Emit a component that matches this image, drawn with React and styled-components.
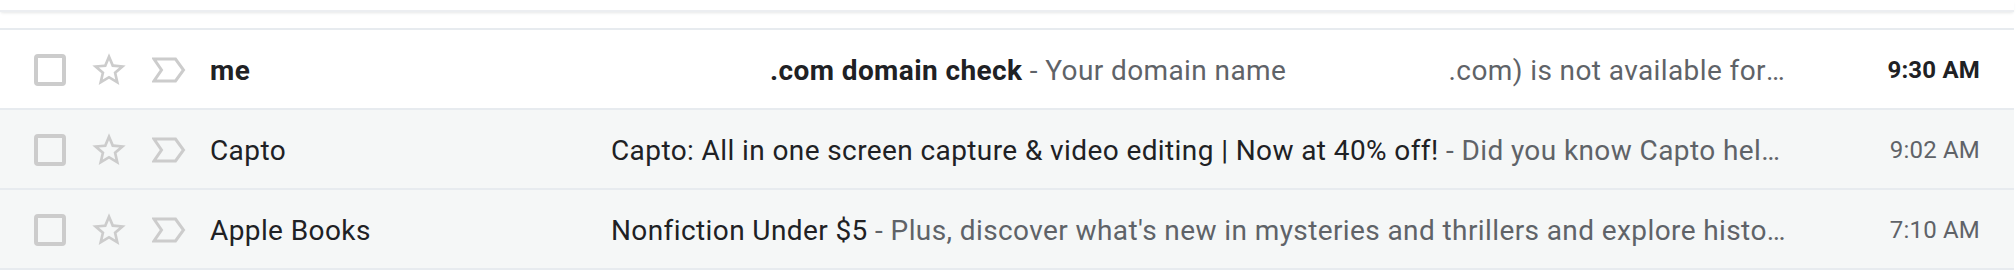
import React from 'react';
import styled, { createGlobalStyle } from 'styled-components';

const GlobalStyle = createGlobalStyle`
  html, body {
    margin: 0;
    padding: 0;
    background: #ffffff;
    font-family: Roboto, "Liberation Sans", Arial, sans-serif;
    -webkit-font-smoothing: antialiased;
  }
`;

const messages = [
  {
    id: 1,
    unread: true,
    sender: 'me',
    subject: [{ hide: 159 }, { text: '.com domain check' }],
    snippet: [
      { text: 'Your domain name ' },
      { hide: 155 },
      { text: '.com) is not available for registration. Please choose another name' },
    ],
    time: '9:30 AM',
  },
  {
    id: 2,
    unread: false,
    sender: 'Capto',
    subject: [{ text: 'Capto: All in one screen capture & video editing | Now at 40% off!' }],
    snippet: [{ text: 'Did you know Capto helps you record your screen, edit videos and more' }],
    time: '9:02 AM',
  },
  {
    id: 3,
    unread: false,
    sender: 'Apple Books',
    subject: [{ text: 'Nonfiction Under $5' }],
    snippet: [
      { text: "Plus, discover what's new in mysteries and thrillers and explore history and biographies" },
    ],
    time: '7:10 AM',
  },
];

const Page = styled.div`
  width: 2014px;
`;

const Toolbar = styled.div`
  height: 10px;
  background: #ffffff;
  border-bottom: 2px solid #eceef1;
  box-shadow: 0 2px 3px -1px rgba(60, 64, 67, 0.12);
`;

const List = styled.div`
  margin-top: 16px;
`;

const Row = styled.div`
  box-sizing: border-box;
  display: flex;
  align-items: center;
  height: 80px;
  padding: 2px 34px 0 34px;
  border-top: 2px solid #e7ebef;
  background: ${(p) => (p.$unread ? '#ffffff' : 'rgba(242, 245, 245, 0.8)')};
  color: #202124;
  letter-spacing: 0.4px;

  &:last-child {
    border-bottom: 2px solid #e7ebef;
    height: 82px;
  }
`;

const Checkbox = styled.span`
  flex: 0 0 auto;
  box-sizing: border-box;
  width: 32px;
  height: 32px;
  border: 4px solid #cccccc;
  border-radius: 4px;
`;

const IconSlot = styled.span`
  flex: 0 0 auto;
  display: flex;
  align-items: center;
  justify-content: center;
  width: ${(p) => p.$w}px;
  margin-left: ${(p) => p.$ml}px;
  color: #cccccc;
`;

const Sender = styled.div`
  flex: 0 0 401px;
  margin-left: 24px;
  font-size: 28px;
  font-weight: ${(p) => (p.$unread ? 700 : 400)};
  white-space: nowrap;
  overflow: hidden;
`;

const Line = styled.div`
  flex: 1 1 auto;
  min-width: 0;
  font-size: 28px;
  color: #5f6368;
  white-space: nowrap;
  overflow: hidden;
  text-overflow: ellipsis;
`;

const Subject = styled.span`
  color: #202124;
  font-weight: ${(p) => (p.$unread ? 700 : 400)};
`;

const Snippet = styled.span`
  color: #5f6368;
`;

const Hidden = styled.span`
  display: inline-block;
  width: ${(p) => p.$w}px;
`;

const Time = styled.div`
  flex: 0 0 190px;
  text-align: right;
  font-size: 24px;
  letter-spacing: 0.2px;
  font-weight: ${(p) => (p.$unread ? 700 : 400)};
  color: ${(p) => (p.$unread ? '#202124' : '#5f6368')};
`;

const StarIcon = () => (
  <svg width="40" height="40" viewBox="0 0 24 24" fill="currentColor">
    <path d="M22 9.24l-7.19-.62L12 2 9.19 8.63 2 9.24l5.46 4.73L5.82 21 12 17.27 18.18 21l-1.63-7.03L22 9.24zM12 15.4l-3.76 2.27 1-4.28-3.32-2.88 4.38-.38L12 6.1l1.71 4.04 4.38.38-3.32 2.88 1 4.28L12 15.4z" />
  </svg>
);

const ImportanceIcon = () => (
  <svg width="34" height="26" viewBox="0 0 34 26">
    <path
      d="M2 2 H23.5 L31.5 13 L23.5 24 H2 L9.5 13 Z"
      fill="none"
      stroke="currentColor"
      strokeWidth="3"
      strokeLinejoin="miter"
    />
  </svg>
);

const renderParts = (parts) =>
  parts.map((part, i) =>
    part.hide ? <Hidden key={i} $w={part.hide} /> : <React.Fragment key={i}>{part.text}</React.Fragment>
  );

export default function App() {
  return (
    <Page>
      <GlobalStyle />
      <Toolbar />
      <List>
        {messages.map((m) => (
          <Row key={m.id} $unread={m.unread}>
            <Checkbox />
            <IconSlot $w={40} $ml={23}>
              <StarIcon />
            </IconSlot>
            <IconSlot $w={34} $ml={23}>
              <ImportanceIcon />
            </IconSlot>
            <Sender $unread={m.unread}>{m.sender}</Sender>
            <Line>
              <Subject $unread={m.unread}>{renderParts(m.subject)}</Subject>
              <Snippet>
                {' - '}
                {renderParts(m.snippet)}
              </Snippet>
            </Line>
            <Time $unread={m.unread}>{m.time}</Time>
          </Row>
        ))}
      </List>
    </Page>
  );
}
